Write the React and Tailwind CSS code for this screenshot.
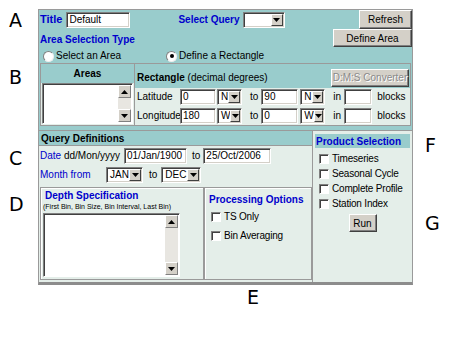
import React from "react";

const blue = "text-[#0000cc]";

function Arrow({ up }) {
  return (
    <svg width="7" height="4" viewBox="0 0 7 4">
      <path d={up ? "M0 4h7L3.5 0z" : "M0 0h7L3.5 4z"} fill="#000" />
    </svg>
  );
}

function Input({ className, value }) {
  return (
    <div
      className={`h-[16px] shrink-0 bg-white border border-t-[#808080] border-l-[#808080] border-b-white border-r-white shadow-[inset_1px_1px_0_#404040,inset_-1px_-1px_0_#d4d0c8] text-[10px] leading-[14px] pl-[2px] overflow-hidden whitespace-nowrap ${className}`}
    >
      {value}
    </div>
  );
}

function Select({ className, value }) {
  return (
    <div
      className={`h-[16px] shrink-0 flex items-center bg-white border border-t-[#808080] border-l-[#808080] border-b-white border-r-white shadow-[inset_1px_1px_0_#404040,inset_-1px_-1px_0_#d4d0c8] p-[1px] ${className}`}
    >
      <span className="flex-1 pl-[2px] text-[10px] leading-[12px]">{value}</span>
      <div className="w-[12px] h-full flex items-center justify-center bg-[#d4d0c8] border border-t-white border-l-white border-b-[#404040] border-r-[#404040]">
        <Arrow />
      </div>
    </div>
  );
}

function Button({ className, children, disabled }) {
  return (
    <div
      className={`shrink-0 flex items-center justify-center bg-[#d4d0c8] border border-t-white border-l-white border-b-[#404040] border-r-[#404040] shadow-[inset_-1px_-1px_0_#808080] text-[10px] ${
        disabled ? "text-[#8a8a8a] [text-shadow:1px_1px_0_#fff]" : "text-black"
      } ${className}`}
    >
      {children}
    </div>
  );
}

function Check({ label, className }) {
  return (
    <div className={`flex items-center ${className}`}>
      <div className="w-[10px] h-[10px] shrink-0 bg-white border border-t-[#808080] border-l-[#808080] border-b-white border-r-white shadow-[inset_1px_1px_0_#404040]" />
      <span className="ml-[3px] text-[10px] leading-[12px] tracking-[-0.2px]">{label}</span>
    </div>
  );
}

function Radio({ label, checked, className }) {
  return (
    <div className={`flex items-center ${className}`}>
      <div className="w-[11px] h-[11px] shrink-0 rounded-full bg-white border border-t-[#808080] border-l-[#808080] border-b-[#eee] border-r-[#eee] flex items-center justify-center">
        {checked && <div className="w-[4px] h-[4px] rounded-full bg-black" />}
      </div>
      <span className="ml-[2px] text-[10px] leading-[12px]">{label}</span>
    </div>
  );
}

function ListBox({ className }) {
  return (
    <div
      className={`flex bg-white border border-t-[#808080] border-l-[#808080] border-b-white border-r-white shadow-[inset_1px_1px_0_#404040] p-[1px] ${className}`}
    >
      <div className="flex-1" />
      <div className="w-[13px] flex flex-col bg-[#e8e6e1]">
        <div className="h-[13px] flex items-center justify-center bg-[#d4d0c8] border border-t-white border-l-white border-b-[#808080] border-r-[#808080]">
          <Arrow up />
        </div>
        <div className="flex-1" />
        <div className="h-[13px] flex items-center justify-center bg-[#d4d0c8] border border-t-white border-l-white border-b-[#808080] border-r-[#808080]">
          <Arrow />
        </div>
      </div>
    </div>
  );
}

function Letter({ children, className }) {
  return (
    <div className={`font-['DejaVu_Sans',sans-serif] text-[19px] leading-[19px] text-black ${className}`}>
      {children}
    </div>
  );
}

function CoordRow({ label, from, fromDir, to, toDir }) {
  return (
    <div className="h-[19px] flex items-center pl-[2px] text-[10px]">
      <span className="w-[43px] shrink-0">{label}</span>
      <Input className="w-[36px]" value={from} />
      <Select className="w-[25px] ml-[1px]" value={fromDir} />
      <span className="ml-[8px]">to</span>
      <Input className="w-[37px] ml-[3px]" value={to} />
      <Select className="w-[25px] ml-[2px]" value={toDir} />
      <span className="ml-[8px]">in</span>
      <Input className="w-[28px] ml-[3px]" value="" />
      <span className="ml-[5px]">blocks</span>
    </div>
  );
}

export default function App() {
  return (
    <div className="w-[450px] h-[350px] bg-white font-['Liberation_Sans',Arial,sans-serif] text-black">
      <div className="flex">
        <div className="w-[38px] shrink-0 flex flex-col pl-[9px]">
          <Letter className="mt-[11px]">A</Letter>
          <Letter className="mt-[38px]">B</Letter>
          <Letter className="mt-[62px]">C</Letter>
          <Letter className="mt-[27px]">D</Letter>
        </div>

        <div className="w-[375px] shrink-0 mt-[9px] border border-[#9a9a9a] border-b-[3px] border-b-[#8c8c8c]">
          {/* top: area selection */}
          <div className="bg-[#99cccc] border-b border-[#9a9a9a] pb-[4px]">
            <div className="h-[19px] flex items-start">
              <div className="h-[19px] flex items-center pl-[1px]">
                <span className={`text-[11px] font-bold ${blue}`}>Title</span>
                <Input className="w-[64px] ml-[4px]" value="Default" />
                <span className={`ml-[48px] text-[10px] font-bold ${blue}`}>Select Query</span>
                <Select className="w-[42px] ml-[3px]" value="" />
              </div>
              <Button className="ml-auto w-[53px] h-[19px]">Refresh</Button>
            </div>
            <div className="h-[18px] flex items-start">
              <span className={`mt-[5px] pl-[1px] text-[10px] leading-[12px] font-bold ${blue}`}>
                Area Selection Type
              </span>
              <Button className="ml-auto w-[79px] h-[18px]">Define Area</Button>
            </div>
            <div className="h-[16px] flex items-center pt-[2px] pl-[4px]">
              <Radio label="Select an Area" />
              <Radio className="ml-[45px]" label="Define a Rectangle" checked />
            </div>
            <div className="mx-[1px] h-[63px] flex border border-[#9a9a9a] bg-[#e4eee9]">
              <div className="w-[94px] shrink-0 border-r border-[#9a9a9a] flex flex-col">
                <div className="h-[19px] bg-[#99cccc] flex items-center justify-center text-[10px] font-bold">
                  Areas
                </div>
                <ListBox className="mx-[1px] h-[41px]" />
              </div>
              <div className="flex-1 flex flex-col">
                <div className="h-[24px] pt-[4px] bg-[#99cccc] flex items-center pl-[2px]">
                  <span className="text-[10px]">
                    <b>Rectangle</b> (decimal degrees)
                  </span>
                  <Button className="ml-auto mr-[1px] w-[78px] h-[18px]" disabled>
                    D:M:S Converter
                  </Button>
                </div>
                <CoordRow label="Latitude" from="0" fromDir="N" to="90" toDir="N" />
                <CoordRow label="Longitude" from="180" fromDir="W" to="0" toDir="W" />
              </div>
            </div>
          </div>

          {/* bottom: query definitions and product selection */}
          <div className="h-[151px] flex bg-[#e4eee9]">
            <div className="w-[274px] shrink-0 border-r border-[#9a9a9a] flex flex-col">
              <div className="h-[15px] bg-[#99cccc] border-b border-[#9a9a9a] flex items-center pl-[2px] text-[10px] font-bold">
                Query Definitions
              </div>
              <div className="h-[19px] flex items-center pl-[1px] text-[10px]">
                <span className="w-[84px] shrink-0 whitespace-nowrap">
                  <span className={blue}>Date</span> dd/Mon/yyyy
                </span>
                <Input className="w-[63px]" value="01/Jan/1900" />
                <span className="ml-[5px]">to</span>
                <Input className="w-[68px] ml-[3px]" value="25/Oct/2006" />
              </div>
              <div className="h-[19px] flex items-center pl-[1px] text-[10px]">
                <span className={`w-[66px] shrink-0 ${blue}`}>Month from</span>
                <Select className="w-[37px]" value="JAN" />
                <span className="ml-[6px]">to</span>
                <Select className="w-[40px] ml-[4px]" value="DEC" />
              </div>
              <div className="mt-[3px] ml-[1px] h-[93px] flex">
                <div className="w-[164px] shrink-0 border border-[#9a9a9a] shadow-[inset_1px_1px_0_#fff] flex flex-col pl-[2px] pt-[2px]">
                  <span className={`pl-[2px] text-[10px] leading-[12px] font-bold ${blue}`}>
                    Depth Specification
                  </span>
                  <span className="text-[7px] leading-[9px] whitespace-nowrap">
                    (First Bin, Bin Size, Bin Interval, Last Bin)
                  </span>
                  <ListBox className="mt-[2px] w-[137px] h-[64px]" />
                </div>
                <div className="w-[108px] shrink-0 border border-[#9a9a9a] shadow-[inset_1px_1px_0_#fff] flex flex-col pl-[4px] pt-[6px]">
                  <span className={`text-[10px] leading-[12px] font-bold ${blue}`}>Processing Options</span>
                  <Check className="h-[19px] pl-[2px] mt-[1px]" label="TS Only" />
                  <Check className="h-[19px] pl-[2px]" label="Bin Averaging" />
                </div>
              </div>
            </div>

            <div className="flex-1 flex flex-col">
              <div className={`mt-[3px] mx-[2px] h-[14px] bg-[#99cccc] flex items-center pl-[1px] text-[10px] font-bold ${blue}`}>
                Product Selection
              </div>
              <div className="mt-[3px] flex flex-col pl-[6px]">
                <Check className="h-[15px]" label="Timeseries" />
                <Check className="h-[15px]" label="Seasonal Cycle" />
                <Check className="h-[15px]" label="Complete Profile" />
                <Check className="h-[15px]" label="Station Index" />
              </div>
              <Button className="mt-[3px] self-center w-[28px] h-[18px]">Run</Button>
            </div>
          </div>
        </div>

        <div className="flex-1 flex flex-col pl-[12px]">
          <Letter className="mt-[136px]">F</Letter>
          <Letter className="mt-[59px]">G</Letter>
        </div>
      </div>
      <Letter className="ml-[247px] mt-[3px]">E</Letter>
    </div>
  );
}
